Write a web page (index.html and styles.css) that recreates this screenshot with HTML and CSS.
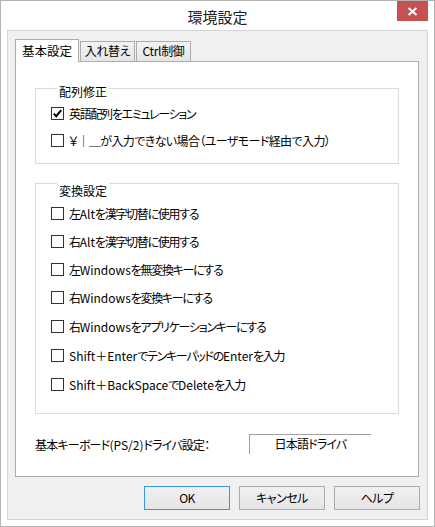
FILE: index.html
```html
<!DOCTYPE html>
<html lang="ja">
<head>
<meta charset="utf-8">
<link rel="stylesheet" href="styles.css">
</head>
<body>
<div class="window">
  <div class="titlebar">
    <span></span>
    <div class="title">環境設定</div>
    <div class="close">
      <svg width="11" height="9" viewBox="0 0 11 9"><path d="M1.5 1 L9.5 8 M9.5 1 L1.5 8" stroke="#fff" stroke-width="2" fill="none"/></svg>
    </div>
  </div>
  <div class="client">
    <div class="tabs">
      <div class="tab selected">基本設定</div>
      <div class="tab">入れ替え</div>
      <div class="tab">Ctrl制御</div>
    </div>
    <div class="panel">
      <div class="group g1">
        <div class="group-title">配列修正</div>
        <div class="row"><span class="cb"><svg width="11" height="11" viewBox="0 0 11 11"><path d="M1.8 5.6 L4.2 8.2 L9.3 2.2" stroke="#000" stroke-width="2" fill="none"/></svg></span>英語配列をエミュレーション</div>
        <div class="row loose"><span class="cb"></span>￥｜＿が入力できない場合（ユーザモード経由で入力）</div>
      </div>
      <div class="group g2">
        <div class="group-title">変換設定</div>
        <div class="row"><span class="cb"></span>左<span class="en">Alt</span>を漢字切替に使用する</div>
        <div class="row"><span class="cb"></span>右<span class="en">Alt</span>を漢字切替に使用する</div>
        <div class="row"><span class="cb"></span>左<span class="en">Windows</span>を無変換キーにする</div>
        <div class="row"><span class="cb"></span>右<span class="en">Windows</span>を変換キーにする</div>
        <div class="row"><span class="cb"></span>右<span class="en">Windows</span>をアプリケーションキーにする</div>
        <div class="row"><span class="cb"></span><span class="en">Shift＋Enter</span>でテンキーパッドの<span class="en">Enter</span>を入力</div>
        <div class="row"><span class="cb"></span><span class="en">Shift＋BackSpace</span>で<span class="en">Delete</span>を入力</div>
      </div>
      <div class="driver">
        <div class="driver-label">基本キーボード<span class="en">(PS/2)</span>ドライバ設定：</div>
        <div class="driver-box">日本語ドライバ</div>
      </div>
    </div>
    <div class="buttons">
      <div class="btn default">OK</div>
      <div class="btn">キャンセル</div>
      <div class="btn">ヘルプ</div>
    </div>
  </div>
</div>
</body>
</html>
```
FILE: styles.css
```css
* { box-sizing: border-box; }
html, body { margin: 0; padding: 0; background: #fff; }
body {
  font-family: "Noto Sans CJK JP", "Noto Sans", sans-serif;
  font-size: 12px;
  color: #000;
  font-feature-settings: "palt";
}
.window {
  width: 435px;
  height: 527px;
  border: 1px solid #b4b4b4;
  background: #fff;
  padding: 0 6px 6px 6px;
  display: flex;
  flex-direction: column;
}
.titlebar {
  height: 29px;
  display: grid;
  grid-template-columns: 1fr auto 1fr;
}
.title {
  font-size: 15px;
  line-height: 29px;
  color: #222;
  padding-top: 1px;
}
.close {
  justify-self: end;
  align-self: start;
  width: 31px;
  height: 20px;
  background: #c75050;
  display: flex;
  align-items: center;
  justify-content: center;
}
.close svg { display: block; }
.client {
  height: 490px;
  border: 1px solid #d4d4d4;
  background: #f0f0f0;
  padding: 8px 7px 9px 7px;
  display: flex;
  flex-direction: column;
}
.tabs {
  display: flex;
  height: 22px;
  align-items: flex-end;
  position: relative;
  z-index: 1;
}
.tab {
  height: 20px;
  border: 1px solid #acacac;
  border-bottom: none;
  background: linear-gradient(#f2f2f2, #e6e6e6);
  line-height: 18px;
  padding: 0;
  width: 55px;
  text-align: center;
  white-space: nowrap;
  margin-left: 1px;
  letter-spacing: -0.3px;
}
.tab.selected {
  height: 23px;
  margin-bottom: -1px;
  width: 64px;
  margin-left: 0;
  background: #fff;
  line-height: 21px;
  font-size: 12.5px;
  letter-spacing: 0;
}
.panel {
  width: 404px;
  height: 416px;
  border: 1px solid #acacac;
  background: #fff;
  padding: 0 19px;
}
.group {
  border: 1px solid #dcdcdc;
  padding: 0 15px;
}
.group-title {
  width: fit-content;
  margin-top: -9px;
  margin-left: 6px;
  padding: 0 2px;
  line-height: 17px;
  background: #fff;
}
.g1 { margin-top: 26px; padding-top: 3px; padding-bottom: 9px; }
.g2 { margin-top: 19px; padding-top: 7px; padding-bottom: 14px; }
.row {
  display: flex;
  align-items: center;
  height: 27px;
  white-space: nowrap;
  letter-spacing: -1.3px;
}
.row.loose { letter-spacing: -0.6px; }
.en { letter-spacing: 0; }
.g2 .row { height: 28px; }
.g2 .row:nth-child(n+5) { height: 29px; }
.cb {
  width: 13px;
  height: 13px;
  border: 1px solid #333;
  background: #fff;
  margin-right: 5px;
  flex: none;
  display: flex;
}
.cb svg { display: block; }
.driver {
  margin-top: 20px;
  display: flex;
  height: 20px;
  align-items: center;
  letter-spacing: -0.8px;
}
.driver-label {
  width: 214px;
}
.driver-box {
  width: 122px;
  height: 20px;
  border-top: 1px solid #a0a0a0;
  border-left: 1px solid #a0a0a0;
  text-align: center;
  line-height: 18px;
}
.buttons {
  margin-top: 9px;
  display: flex;
  justify-content: flex-end;
  gap: 9px;
}
.btn {
  width: 86px;
  height: 24px;
  border: 1px solid #acacac;
  background: linear-gradient(#f0f0f0, #e5e5e5);
  text-align: center;
  line-height: 22px;
  letter-spacing: -0.5px;
}
.btn.default {
  border-color: #3c95e8;
}
```
